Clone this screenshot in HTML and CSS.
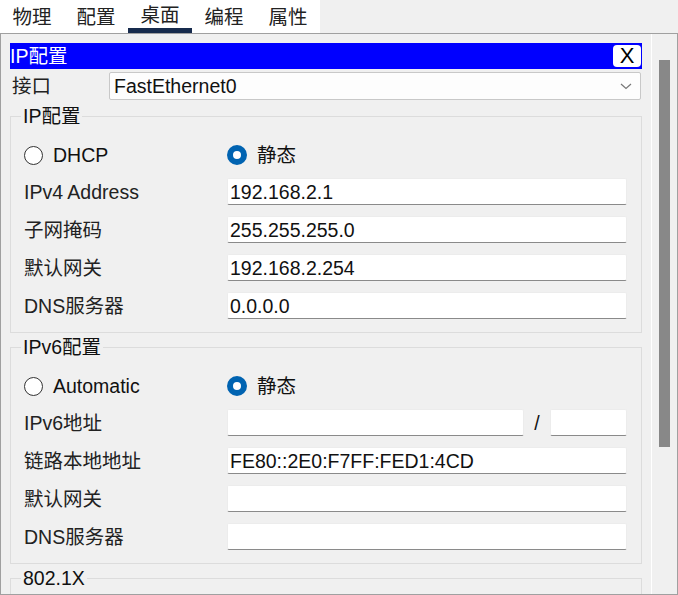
FILE: index.html
```html
<!DOCTYPE html>
<html lang="zh-CN">
<head>
    <meta charset="UTF-8">
    <title>桌面 - IP配置</title>
    <link rel="stylesheet" href="styles.css">
</head>
<body>
    <div class="tabs">
        <div class="tab">物理</div>
        <div class="tab">配置</div>
        <div class="tab active">桌面</div>
        <div class="tab">编程</div>
        <div class="tab">属性</div>
    </div>

    <div class="panel">
        <div class="content">
            <div class="title-bar">
                <span>IP配置</span>
                <button class="close-btn">X</button>
            </div>

            <div class="iface-row">
                <span class="iface-label">接口</span>
                <div class="select">
                    <span>FastEthernet0</span>
                    <svg width="12" height="7" viewBox="0 0 12 7"><path d="M1 1 L6 5.5 L11 1" fill="none" stroke="#777" stroke-width="1.2"/></svg>
                </div>
            </div>

            <fieldset class="group">
                <legend>IP配置</legend>
                <div class="radio-row">
                    <label class="radio"><span class="dot"></span>DHCP</label>
                    <label class="radio checked"><span class="dot"></span>静态</label>
                </div>
                <div class="field">
                    <span class="label">IPv4 Address</span>
                    <div class="input">192.168.2.1</div>
                </div>
                <div class="field">
                    <span class="label">子网掩码</span>
                    <div class="input">255.255.255.0</div>
                </div>
                <div class="field">
                    <span class="label">默认网关</span>
                    <div class="input">192.168.2.254</div>
                </div>
                <div class="field">
                    <span class="label">DNS服务器</span>
                    <div class="input">0.0.0.0</div>
                </div>
            </fieldset>

            <fieldset class="group">
                <legend>IPv6配置</legend>
                <div class="radio-row">
                    <label class="radio"><span class="dot"></span>Automatic</label>
                    <label class="radio checked"><span class="dot"></span>静态</label>
                </div>
                <div class="field">
                    <span class="label">IPv6地址</span>
                    <div class="input"></div>
                    <span class="slash">/</span>
                    <div class="input prefix"></div>
                </div>
                <div class="field">
                    <span class="label">链路本地地址</span>
                    <div class="input">FE80::2E0:F7FF:FED1:4CD</div>
                </div>
                <div class="field">
                    <span class="label">默认网关</span>
                    <div class="input"></div>
                </div>
                <div class="field">
                    <span class="label">DNS服务器</span>
                    <div class="input"></div>
                </div>
            </fieldset>

            <fieldset class="group last">
                <legend>802.1X</legend>
            </fieldset>
        </div>

        <div class="scrollbar">
            <div class="thumb"></div>
        </div>
    </div>
</body>
</html>
```

FILE: styles.css
```css
body {
    margin: 0;
    background-color: #f0f0f0;
    font-family: "Liberation Sans", "Noto Sans CJK SC", sans-serif;
    font-size: 19.5px;
    line-height: 24px;
    color: #111;
    overflow: hidden;
}

.tabs {
    display: flex;
    width: 320px;
    height: 33px;
    background-color: #fff;
}

.tab {
    width: 64px;
    height: 33px;
    box-sizing: border-box;
    text-align: center;
    line-height: 33px;
    color: #222;
    padding-top: 1px;
}

.tab.active {
    border-bottom: 5px solid #172b4d;
    line-height: 31px;
    padding-top: 0;
}

.panel {
    display: flex;
    height: 562px;
    box-sizing: border-box;
    border: 1px solid #a0a0a0;
    overflow: hidden;
}

.content {
    flex: 1;
    padding: 9px 9px 0 9px;
}

.title-bar {
    display: flex;
    align-items: center;
    justify-content: space-between;
    height: 26px;
    background-color: #0000ff;
    color: #fff;
    line-height: 26px;
}

.close-btn {
    width: 28px;
    height: 22px;
    margin-right: 1px;
    padding: 0;
    border: none;
    border-radius: 4px;
    background-color: #fff;
    color: #000;
    font-family: "Liberation Sans", sans-serif;
    font-size: 22px;
    line-height: 22px;
}

.iface-row {
    display: flex;
    align-items: center;
    margin-top: 3px;
    margin-right: 1px;
}

.iface-label {
    width: 97px;
    padding-left: 2px;
    color: #222;
}

.select {
    flex: 1;
    display: flex;
    align-items: center;
    justify-content: space-between;
    height: 28px;
    box-sizing: border-box;
    padding: 0 8px 0 4px;
    background-color: #fdfdfd;
    border: 1px solid #c8c8c8;
    border-radius: 2px;
}

.group {
    margin: 5px 0 0 0;
    padding: 15px 14px 13px 13px;
    border: 1px solid #dcdcdc;
}

.group + .group {
    margin-top: 3px;
}

.group.last {
    min-height: 40px;
}

.group legend {
    margin-left: -3px;
    padding: 0 2px;
    line-height: 22px;
}

.radio-row {
    display: flex;
    height: 26px;
    align-items: center;
    margin-bottom: 10px;
}

.radio {
    display: flex;
    align-items: center;
    width: 203px;
}

.radio .dot {
    width: 19px;
    height: 19px;
    box-sizing: border-box;
    margin-right: 10px;
    border: 1px solid #333;
    border-radius: 50%;
    background-color: #fff;
}

.radio.checked .dot {
    width: 20px;
    height: 20px;
    border: 6px solid #0063b1;
    background-color: #fff;
}

.field {
    display: flex;
    align-items: center;
    height: 27px;
    margin-bottom: 11px;
}

.field:last-child {
    margin-bottom: 0;
}

.label {
    width: 203px;
    color: #222;
}

.input {
    flex: 1;
    height: 27px;
    box-sizing: border-box;
    padding-left: 2px;
    background-color: #fff;
    border: 1px solid #ececec;
    border-bottom-color: #8a8a8a;
    border-radius: 2px;
    line-height: 26px;
}

.slash {
    width: 26px;
    text-align: center;
}

.input.prefix {
    flex: none;
    width: 77px;
}

.scrollbar {
    width: 26px;
    border-left: 1px solid #fff;
    padding-top: 26px;
    box-sizing: border-box;
}

.thumb {
    width: 11px;
    height: 387px;
    margin-left: 7px;
    background-color: #888;
}
```
